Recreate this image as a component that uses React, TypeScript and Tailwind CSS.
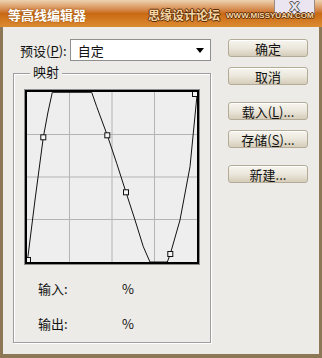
import React from 'react';

const font = "font-['Noto_Sans_CJK_SC','Noto_Sans',sans-serif]";

const curve: [number, number][] = [
  [0.3, 169.7], [8, 108], [16.3, 45.3], [21, 20], [25.3, 0.3], [64.7, 0.3], [69.7, 14.7],
  [80.3, 43.3], [89.7, 71.3], [99, 100.3], [108, 128], [116.3, 154.7], [123, 170],
  [140.3, 170], [143.3, 162], [153, 128], [163, 74.7], [170.3, 0.3],
];

const knots: [number, number][] = [
  [1, 168], [16.3, 45.3], [80.3, 43.3], [99, 100.3], [143.3, 162], [168, 2],
];

const Btn: React.FC<{ children: React.ReactNode }> = ({ children }) => (
  <button className="w-[80px] h-[18px] rounded-[3px] border border-[#b3ab98] bg-gradient-to-b from-[#f7f5ef] via-[#ebe7dc] to-[#d6cdb9] text-[13px] leading-none text-[#111] flex items-center justify-center shadow-[inset_0_1px_0_#fff]">
    {children}
  </button>
);

const Graph: React.FC = () => (
  <div className="w-[176px] h-[176px] border border-[#8d8d8d]">
    <div className="w-full h-full border-2 border-black bg-[#eeeeee]">
      <svg width="170" height="170" viewBox="0 0 170 170" className="block">
        {[42.5, 85, 127.5].map((v) => (
          <g key={v} stroke="#b4b4b4" strokeWidth="1">
            <line x1={v} y1="0" x2={v} y2="170" />
            <line x1="0" y1={v} x2="170" y2={v} />
          </g>
        ))}
        <polyline
          points={curve.map((p) => p.join(',')).join(' ')}
          fill="none"
          stroke="#111"
          strokeWidth="1"
        />
        {knots.map(([x, y], i) => (
          <rect key={i} x={x - 2.5} y={y - 2.5} width="5" height="5" fill="#f4f4f4" stroke="#111" strokeWidth="1" />
        ))}
      </svg>
    </div>
  </div>
);

const outline = '[text-shadow:1px_0_0_#5a2c06,-1px_0_0_#5a2c06,0_1px_0_#5a2c06,0_-1px_0_#5a2c06]';

export default function App() {
  return (
    <div className={`w-[322px] h-[358px] flex flex-col overflow-hidden bg-[#ecebe7] ${font}`}>
      <div className="h-[27px] shrink-0 relative flex items-center whitespace-nowrap bg-gradient-to-b from-[#ecd3b0] via-[#c96a12] to-[#dc8c32]">
        <div className="absolute right-[7px] top-0 w-[41px] h-[15px] bg-[#ebe5f2] border-x border-b border-[#9a8a84] flex items-start justify-center">
          <span className="text-[13px] font-bold leading-none text-[#e8e4ee] [font-family:'DejaVu_Sans',sans-serif] [text-shadow:1px_0_0_#555,-1px_0_0_#555,0_1px_0_#555,0_-1px_0_#555]">
            X
          </span>
        </div>
        <span className="shrink-0 pl-[8px] pt-[2px] text-[13px] font-bold text-white leading-none [text-shadow:0_0_2px_#8a4a08]">
          等高线编辑器
        </span>
        <span className={`relative shrink-0 ml-[62px] pt-[2px] text-[12px] font-bold leading-none text-[#f6d6a6] ${outline}`}>
          思缘设计论坛
        </span>
        <span className={`relative shrink-0 ml-[6px] mt-[5px] text-[8px] font-bold leading-none text-[#f6d6a6] [font-family:'Liberation_Sans',sans-serif] ${outline}`}>
          WWW.MISSYUAN.COM
        </span>
      </div>

      <div className="flex-1 flex border-l-[3px] border-r-[3px] border-b-[4px] border-[#8c7757]">
        <div className="w-[208px] shrink-0 flex flex-col">
          <div className="mt-[12px] flex items-center h-[22px]">
            <span className="pl-[17px] w-[67px] text-[13px] text-[#111] leading-none">
              预设(<span className="underline">P</span>):
            </span>
            <div className="w-[142px] h-[22px] bg-white border border-[#8f8f8f] flex items-center justify-between pl-[7px] pr-[6px]">
              <span className="text-[13px] text-[#111] leading-none">自定</span>
              <span className="w-0 h-0 border-l-[4px] border-r-[4px] border-t-[5px] border-l-transparent border-r-transparent border-t-black" />
            </div>
          </div>

          <div className="ml-[10px] mt-[12px] w-[198px] h-[270px] relative border border-[#9d9d9d] shadow-[inset_1px_1px_0_#fff,1px_1px_0_#fff]">
            <span className="absolute left-[16px] -top-[9px] px-[3px] bg-[#ecebe7] text-[13px] leading-none text-[#111]">
              映射
            </span>
            <div className="ml-[10px] mt-[15px]">
              <Graph />
            </div>
            <div className="mt-[17px] flex items-center text-[13px] leading-none text-[#111]">
              <span className="pl-[24px] w-[108px]">输入:</span>
              <span>%</span>
            </div>
            <div className="mt-[22px] flex items-center text-[13px] leading-none text-[#111]">
              <span className="pl-[24px] w-[108px]">输出:</span>
              <span>%</span>
            </div>
          </div>
        </div>

        <div className="ml-[17px] flex flex-col">
          <div className="mt-[12px] flex flex-col gap-[10px]">
            <Btn>确定</Btn>
            <Btn>取消</Btn>
          </div>
          <div className="mt-[17px] flex flex-col gap-[10px]">
            <Btn>
              载入(<span className="underline">L</span>)...
            </Btn>
            <Btn>
              存储(<span className="underline">S</span>)...
            </Btn>
          </div>
          <div className="mt-[17px]">
            <Btn>新建...</Btn>
          </div>
        </div>
      </div>
    </div>
  );
}
